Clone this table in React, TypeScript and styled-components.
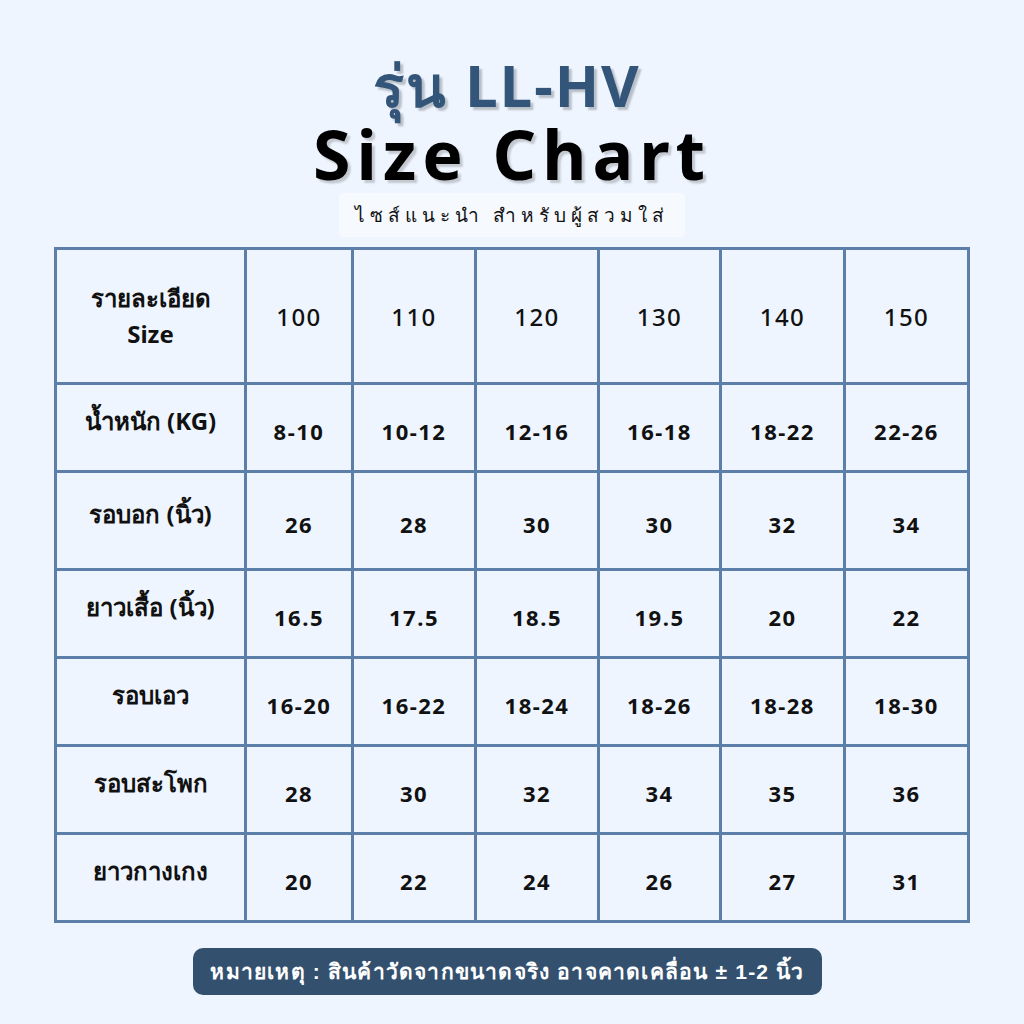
import React from "react";
import styled, { createGlobalStyle } from "styled-components";

const GlobalStyle = createGlobalStyle`
  html, body {
    margin: 0;
    padding: 0;
    background: #eef5fe;
  }
  body {
    font-family: "Noto Sans", "DejaVu Sans", sans-serif;
  }
`;

const sizes = ["100", "110", "120", "130", "140", "150"];

const rows: { label: string; values: string[] }[] = [
  { label: "น้ำหนัก (KG)", values: ["8-10", "10-12", "12-16", "16-18", "18-22", "22-26"] },
  { label: "รอบอก (นิ้ว)", values: ["26", "28", "30", "30", "32", "34"] },
  { label: "ยาวเสื้อ (นิ้ว)", values: ["16.5", "17.5", "18.5", "19.5", "20", "22"] },
  { label: "รอบเอว", values: ["16-20", "16-22", "18-24", "18-26", "18-28", "18-30"] },
  { label: "รอบสะโพก", values: ["28", "30", "32", "34", "35", "36"] },
  { label: "ยาวกางเกง", values: ["20", "22", "24", "26", "27", "31"] },
];

const rowHeights = [132, 85, 95, 85, 85, 85, 85];

const App: React.FC = () => {
  return (
    <>
      <GlobalStyle />
      <Page>
        <Model>รุ่น LL-HV</Model>
        <Title>Size Chart</Title>
        <Subtitle>ไซส์แนะนำ สำหรับผู้สวมใส่</Subtitle>
        <Table style={{ gridTemplateRows: rowHeights.map((h) => `${h}px`).join(" ") }}>
          <LabelCell $top>
            รายละเอียด
            <br />
            Size
          </LabelCell>
          {sizes.map((s) => (
            <HeadCell key={s}>{s}</HeadCell>
          ))}
          {rows.map((r) => (
            <React.Fragment key={r.label}>
              <LabelCell>{r.label}</LabelCell>
              {r.values.map((v, i) => (
                <ValueCell key={i}>{v}</ValueCell>
              ))}
            </React.Fragment>
          ))}
        </Table>
        <Note>หมายเหตุ : สินค้าวัดจากขนาดจริง อาจคาดเคลื่อน ± 1-2 นิ้ว</Note>
      </Page>
    </>
  );
};

export default App;

const Page = styled.div`
  width: 1024px;
  height: 1024px;
  box-sizing: border-box;
  padding-top: 55px;
  display: flex;
  flex-direction: column;
  align-items: center;
  background: #eef5fe;
  overflow: hidden;
`;

const Model = styled.div`
  font-family: "Noto Sans", "DejaVu Sans", sans-serif;
  font-size: 58px;
  font-weight: 700;
  line-height: 60px;
  color: #34557a;
  letter-spacing: 2px;
  text-shadow: 3px 3px 2px #b9bfc8;
  margin-left: -10px;
`;

const Title = styled.div`
  font-family: "Noto Sans", "DejaVu Sans", sans-serif;
  font-size: 68px;
  font-weight: 700;
  line-height: 66px;
  margin-top: 6px;
  color: #000;
  letter-spacing: 6px;
  text-shadow: 3px 3px 2px #c3c8d0;
`;

const Subtitle = styled.div`
  margin-top: 6px;
  padding: 0 16px;
  height: 44px;
  line-height: 44px;
  background: #f6f9fe;
  border-radius: 4px;
  font-size: 19px;
  letter-spacing: 5px;
  color: #111;
`;

const Table = styled.div`
  margin-top: 10px;
  display: grid;
  grid-template-columns: 187px 104px 120px 120px 119px 121px 121px;
  gap: 3px;
  padding: 3px;
  box-sizing: border-box;
  width: 916px;
  background: #5b7fa8;
`;

const Cell = styled.div`
  background: #eef5fe;
  display: flex;
  align-items: center;
  justify-content: center;
  text-align: center;
  color: #111;
`;

const LabelCell = styled(Cell)<{ $top?: boolean }>`
  font-size: 24px;
  font-weight: 700;
  line-height: 36px;
  padding-bottom: ${(p) => (p.$top ? "0" : "14px")};
`;

const HeadCell = styled(Cell)`
  font-size: 24px;
  font-weight: 500;
  letter-spacing: 1.5px;
`;

const ValueCell = styled(Cell)`
  font-size: 22px;
  font-weight: 700;
  letter-spacing: 1.5px;
  padding-top: 6px;
`;

const Note = styled.div`
  margin-top: 25px;
  width: 629px;
  height: 47px;
  box-sizing: border-box;
  background: #34506f;
  border-radius: 10px;
  color: #fff;
  font-family: "Liberation Sans", "Noto Sans", sans-serif;
  font-size: 21px;
  font-weight: 700;
  display: flex;
  align-items: center;
  justify-content: center;
  letter-spacing: 1.2px;
  margin-left: -9px;
`;
